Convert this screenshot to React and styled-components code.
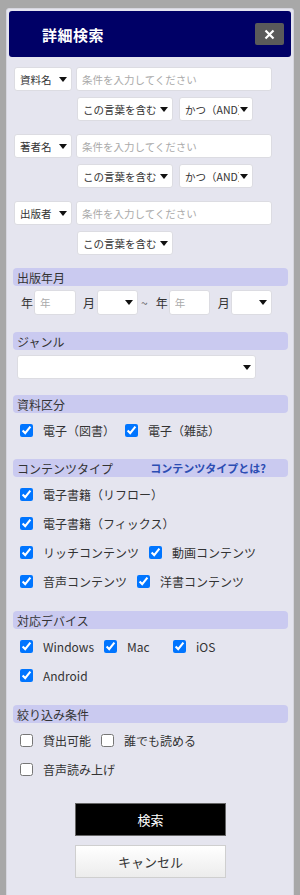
import React from "react";
import styled, { createGlobalStyle } from "styled-components";

const GlobalStyle = createGlobalStyle`
  html, body {
    margin: 0;
    padding: 0;
    background: #a8a8a8;
  }
  body {
    font-family: "Noto Sans CJK JP", "Noto Sans", sans-serif;
    color: #333;
  }
  * {
    box-sizing: border-box;
  }
`;

const Panel = styled.div`
  margin: 8px 6px 0 6px;
  width: 288px;
  background: #e5e5ef;
  border: 1px solid #d6d6de;
  border-radius: 3px;
  padding: 2px 2px 40px 2px;
`;

const Header = styled.div`
  height: 46px;
  background: #000066;
  border-radius: 3px;
  display: flex;
  align-items: center;
  justify-content: space-between;
  padding: 0 7px 0 33px;
`;

const Title = styled.h1`
  margin: 0;
  font-size: 15px;
  font-weight: bold;
  color: #fff;
  letter-spacing: 0.5px;
`;

const CloseButton = styled.button`
  width: 29px;
  height: 22px;
  border: none;
  border-radius: 2px;
  background: #5a5a5a;
  color: #fff;
  display: flex;
  align-items: center;
  justify-content: center;
  padding: 0;
  cursor: pointer;
`;

const Body = styled.div`
  padding: 10px 3px 0 4px;
`;

const SearchGroup = styled.div`
  display: flex;
  flex-direction: column;
  gap: 6px;
  margin-bottom: 13px;
  padding-left: 1px;
`;

const FieldRow = styled.div`
  display: flex;
  align-items: center;
  gap: ${(p) => p.$gap || 4}px;
  padding-left: ${(p) => p.$indent || 0}px;
`;

const SelectBox = styled.div`
  width: ${(p) => p.$w}px;
  height: ${(p) => p.$h || 24}px;
  background: #fff;
  border: 1px solid #dcdce2;
  border-radius: 3px;
  display: flex;
  align-items: center;
  padding: 0 4px 0 5px;
  font-size: 10.5px;
  color: #333;
  white-space: nowrap;
  overflow: hidden;
  flex-shrink: 0;
`;

const SelectText = styled.span`
  flex: 1;
  overflow: hidden;
`;

const Caret = styled.span`
  width: 0;
  height: 0;
  border-left: 4.5px solid transparent;
  border-right: 4.5px solid transparent;
  border-top: 5px solid #111;
  margin-left: 1px;
  flex-shrink: 0;
`;

const TextInput = styled.input`
  width: ${(p) => p.$w}px;
  height: ${(p) => p.$h || 24}px;
  background: #fff;
  border: 1px solid #dcdce2;
  border-radius: 3px;
  padding: 0 5px;
  font-family: inherit;
  font-size: 10.5px;
  color: #333;
  outline: none;
  flex-shrink: 0;
  &::placeholder {
    color: #aaa;
  }
`;

const Section = styled.section`
  margin-bottom: ${(p) => p.$mb ?? 15}px;
`;

const SectionHead = styled.div`
  height: 18px;
  background: #cacaf0;
  border-radius: 4px;
  display: flex;
  align-items: center;
  justify-content: space-between;
  padding: 0 22px 0 4px;
  font-size: 12px;
  color: #333;
`;

const HelpLink = styled.a`
  color: #2c4db3;
  font-size: 11px;
  font-weight: bold;
  text-decoration: none;
`;

const DateRow = styled.div`
  display: flex;
  align-items: center;
  margin-top: 4px;
  padding-left: 8px;
  height: 25px;
  font-size: 12px;
  color: #333;
`;

const DateLabel = styled.span`
  margin-left: ${(p) => p.$ml || 0}px;
  margin-right: ${(p) => p.$mr || 1}px;
`;

const Tilde = styled.span`
  margin: 0 8px 0 3px;
  color: #666;
`;

const GenreWrap = styled.div`
  margin-top: 5px;
  padding-left: 4px;
`;

const CheckList = styled.div`
  padding: 3px 0 0 7px;
`;

const CheckRow = styled.div`
  display: flex;
  align-items: center;
  height: 29px;
`;

const CheckItem = styled.label`
  display: flex;
  align-items: center;
  margin-right: 10px;
  font-size: 12px;
  color: #333;
  white-space: nowrap;
  input {
    width: 13px;
    height: 13px;
    margin: 0 10px 0 0;
  }
  span {
    min-width: 36px;
  }
`;

const Buttons = styled.div`
  display: flex;
  flex-direction: column;
  align-items: center;
  gap: 9px;
  margin-top: 19px;
`;

const SearchButton = styled.button`
  width: 151px;
  height: 33px;
  background: #000;
  border: 1px solid #666;
  color: #fff;
  font-family: inherit;
  font-size: 13px;
`;

const CancelButton = styled.button`
  width: 151px;
  height: 33px;
  background: linear-gradient(#ffffff, #ececec);
  border: 1px solid #cfcfcf;
  color: #333;
  font-family: inherit;
  font-size: 13px;
`;

const Select = ({ w, h, children }) => (
  <SelectBox $w={w} $h={h}>
    <SelectText>{children}</SelectText>
    <Caret />
  </SelectBox>
);

const Check = ({ label, checked }) => (
  <CheckItem>
    <input type="checkbox" defaultChecked={checked} />
    <span>{label}</span>
  </CheckItem>
);

const groups = [
  { field: "資料名", and: true },
  { field: "著者名", and: true },
  { field: "出版者", and: false },
];

export default function App() {
  return (
    <>
      <GlobalStyle />
      <Panel>
        <Header>
          <Title>詳細検索</Title>
          <CloseButton aria-label="閉じる">
            <svg width="11" height="11" viewBox="0 0 11 11">
              <path d="M1.5 1.5 L9.5 9.5 M9.5 1.5 L1.5 9.5" stroke="#fff" strokeWidth="2.2" />
            </svg>
          </CloseButton>
        </Header>

        <Body>
          {groups.map((g) => (
            <SearchGroup key={g.field}>
              <FieldRow>
                <Select w={58}>{g.field}</Select>
                <TextInput $w={196} placeholder="条件を入力してください" />
              </FieldRow>
              <FieldRow $indent={63} $gap={6}>
                <Select w={96}>この言葉を含む</Select>
                {g.and && <Select w={74}>かつ（AND）</Select>}
              </FieldRow>
            </SearchGroup>
          ))}

          <Section $mb={17}>
            <SectionHead>出版年月</SectionHead>
            <DateRow>
              <DateLabel>年</DateLabel>
              <TextInput $w={42} $h={25} placeholder="年" />
              <DateLabel $ml={7} $mr={2}>月</DateLabel>
              <Select w={41} h={25}></Select>
              <Tilde>~</Tilde>
              <DateLabel>年</DateLabel>
              <TextInput $w={41} $h={25} placeholder="年" />
              <DateLabel $ml={8}>月</DateLabel>
              <Select w={41} h={25}></Select>
            </DateRow>
          </Section>

          <Section $mb={16}>
            <SectionHead>ジャンル</SectionHead>
            <GenreWrap>
              <Select w={239}></Select>
            </GenreWrap>
          </Section>

          <Section $mb={14}>
            <SectionHead>資料区分</SectionHead>
            <CheckList>
              <CheckRow>
                <Check label="電子（図書）" checked />
                <Check label="電子（雑誌）" checked />
              </CheckRow>
            </CheckList>
          </Section>

          <Section>
            <SectionHead>
              コンテンツタイプ
              <HelpLink href="#">コンテンツタイプとは?</HelpLink>
            </SectionHead>
            <CheckList>
              <CheckRow>
                <Check label="電子書籍（リフロー）" checked />
              </CheckRow>
              <CheckRow>
                <Check label="電子書籍（フィックス）" checked />
              </CheckRow>
              <CheckRow>
                <Check label="リッチコンテンツ" checked />
                <Check label="動画コンテンツ" checked />
              </CheckRow>
              <CheckRow>
                <Check label="音声コンテンツ" checked />
                <Check label="洋書コンテンツ" checked />
              </CheckRow>
            </CheckList>
          </Section>

          <Section>
            <SectionHead>対応デバイス</SectionHead>
            <CheckList>
              <CheckRow>
                <Check label="Windows" checked />
                <Check label="Mac" checked />
                <Check label="iOS" checked />
              </CheckRow>
              <CheckRow>
                <Check label="Android" checked />
              </CheckRow>
            </CheckList>
          </Section>

          <Section $mb={0}>
            <SectionHead>絞り込み条件</SectionHead>
            <CheckList>
              <CheckRow>
                <Check label="貸出可能" />
                <Check label="誰でも読める" />
              </CheckRow>
              <CheckRow>
                <Check label="音声読み上げ" />
              </CheckRow>
            </CheckList>
          </Section>

          <Buttons>
            <SearchButton>検索</SearchButton>
            <CancelButton>キャンセル</CancelButton>
          </Buttons>
        </Body>
      </Panel>
    </>
  );
}
